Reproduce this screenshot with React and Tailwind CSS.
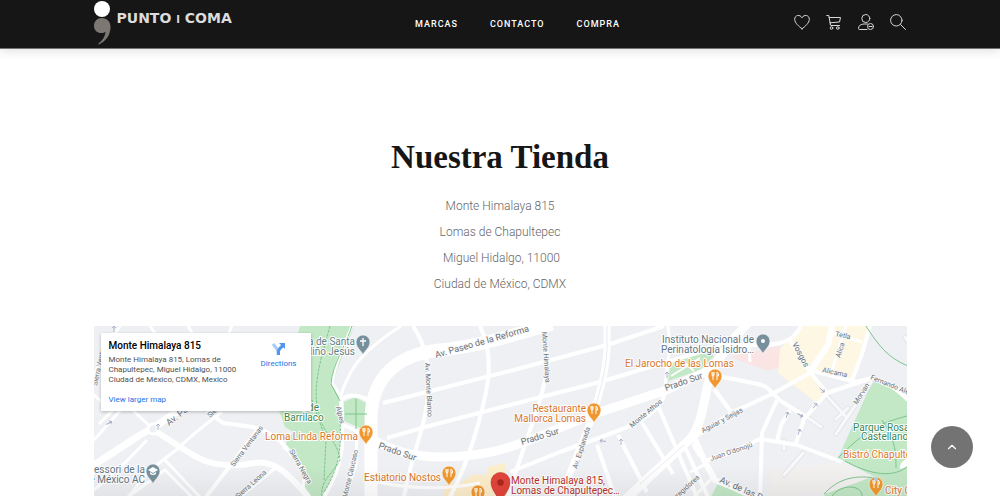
import React from 'react';
import { ChevronUp } from 'lucide-react';

const NAV_LINKS = ['Marcas', 'Contacto', 'Compra'];

const ADDRESS = [
  'Monte Himalaya 815',
  'Lomas de Chapultepec',
  '\u00a0Miguel Hidalgo, 11000',
  'Ciudad de México, CDMX',
];

// [path, width]
const ROADS = [
  // west side
  ['M94 465 L140 435 L153 428 L185 406 L230 376', 7],
  ['M155 431 C170 440 182 449 197 457 C212 466 236 467 254 463 C272 460 286 470 308 497', 6],
  ['M153 429 L126 404 L94 440', 3],
  ['M126 404 L150 380', 3],
  ['M94 395 L112 411 L99 424', 3],
  ['M180 447 C190 436 206 424 222 412', 3],
  ['M180 447 L150 470 L128 497', 3],
  ['M207 411 L223 423 L253 427 C272 432 284 442 292 456', 4],
  ['M258 429 L233 462 L206 497', 4],
  ['M278 466 L240 497', 3],
  ['M283 447 C300 457 306 470 303 490', 3],
  ['M94 490 L126 462 L147 440', 3],
  ['M128 497 L165 470 L192 497', 3],
  ['M165 460 L200 497', 3],
  ['M120 326 L104 350 L94 376', 3],
  ['M150 326 L163 345 M188 326 L196 340 M232 326 L226 340', 3],
  // around the glorieta
  ['M352 326 C344 346 334 366 332 383 L341 397', 3],
  ['M401 326 C376 342 356 360 349 376 C344 386 341 392 341 400', 3],
  ['M341 400 C350 392 362 396 372 402', 4],
  ['M341 400 C343 440 346 460 324 497', 4],
  ['M341 424 L370 437', 4],
  ['M357 431 L356 463 C354 476 348 486 344 497', 3],
  // centre
  ['M383 403 L510 371 L607 345 L664 326', 4],
  ['M387 438 L425 427 L510 405 L600 382 L690 355 L742 336', 4],
  ['M413 326 C426 345 429 365 428 390 C427 425 411 455 404 497', 4],
  ['M480 326 C489 345 490 362 488 380 C484 408 470 460 450 497', 4],
  ['M543 326 C545 345 550 362 545 380 C539 410 520 455 508 497', 4],
  ['M607 326 L607 350 C606 372 599 395 592 418 L568 478', 7],
  ['M510 472 L560 452 L612 433 C640 423 662 410 664 394', 4],
  ['M370 480 C400 488 440 491 480 483', 3],
  ['M597 445 L615 497', 4],
  ['M618 435 L647 492', 4],
  ['M641 421 L673 474', 4],
  ['M659 408 L679 455 L697 497', 4],
  ['M693 444 L700 456', 4],
  ['M625 497 L653 470 M684 445 L708 497', 4],
  ['M664 394 L670 345 L668 326', 3],
  // east side
  ['M713 375 L758 384 C772 387 774 398 784 403 L806 417', 4],
  ['M693 438 L733 412 L772 394 L810 373', 4],
  ['M714 389 L732 413', 4],
  ['M705 461 L727 454 L760 439 L797 445 L842 462', 4],
  ['M694 437 L705 462 L715 480 L757 497', 6],
  ['M777 400 L762 433 L760 497', 4],
  ['M790 410 L781 425 L777 441', 4],
  ['M872 378 L827 393 L804 419 L795 446', 4],
  ['M788 338 L810 372 L827 393', 4],
  ['M832 326 L828 345 L810 372', 6],
  ['M810 370 L856 382 L872 378', 4],
  ['M846 326 L838 350 L832 371', 3],
  ['M870 326 L862 354 L852 380', 4],
  ['M828 332 L862 342', 3],
  ['M735 345 L763 345 C785 344 794 340 801 326', 4],
  ['M749 345 L750 362', 3],
  ['M872 378 C888 382 898 390 908 400', 4],
  ['M690 472 L706 464 M694 497 L712 478', 3],
  ['M903 468 C902 464 908 462 909 460', 6],
];

const MAIN_ROADS = [
  ['M371 497 L371 420 C371 375 400 354 440 350 C480 346 510 336 552 324', 13],
  ['M371 438 C400 458 440 460 480 454 C520 448 555 428 600 412 L664 391 L710 370', 9],
  ['M749 322 C728 344 714 362 709 380 C703 404 702 424 690 439 L626 499', 9],
];

const PARKS = [
  'M277 405 L285 427 L293 432 L283 448 L299 460 L303 484 L312 497 L325 497 L337 470 L342 453 L342 423 L339 397 L332 383 L354 326 L300 326 Z',
  'M344 402 L355 397 L366 403 L367 431 L344 421 Z',
  'M873 380 C886 378 896 386 907 398 L907 497 L824 497 C826 486 845 479 875 477 L838 458 Z',
  'M671 363 L668 381 L700 370 L714 356 L708 352 Z',
  'M718 483 L746 497 L711 497 Z',
];

const PATHS = [
  'M352 326 C346 345 332 365 331 384 L340 401',
  'M330 326 C322 355 312 385 318 410 C322 435 338 440 340 460 C332 475 320 480 322 497',
  'M340 420 C342 450 338 470 324 492',
  'M312 400 L326 440 L324 480',
  'M345 414 L367 414 M356 399 L356 429',
  'M866 326 C878 345 888 358 908 366',
  'M838 458 C860 436 875 424 907 416',
  'M845 461 C865 472 890 480 907 467',
  'M875 478 C850 474 835 482 824 494',
  'M882 420 C895 440 896 450 896 468',
  'M862 496 C862 485 842 483 832 496',
];

const STREET_LABELS = [
  ['Av. Paseo de la Reforma', 436, 358, -16, 9],
  ['Prado Sur', 378, 448, 19, 9],
  ['Prado Sur', 522, 445, -17, 9],
  ['Prado Sur', 666, 391, -19, 9],
  ['Av. Monte Blanco', 425, 363, 87, 7],
  ['Monte Himalaya', 542, 332, 86, 7],
  ['Av. Explanada', 577, 469, -72, 7],
  ['Monte Athos', 632, 428, -40, 7],
  ['Sierra Ventanas', 234, 467, -53, 7],
  ['Sierra Leona', 238, 499, -42, 7],
  ['Sierra Negra', 289, 451, 60, 7],
  ['Av. Pa', 169, 426, -38, 9],
  ['Sierra', 210, 418, -42, 7],
  ['Sierra Ventana', 97, 386, -78, 7],
  ['Alpes', 336, 407, 76, 7],
  ['Monte Cáucaso', 347, 498, -77, 7],
  ['Aguiar y Seijas', 703, 433, -28, 7],
  ["Juan O'donojú", 711, 461, -19, 7],
  ['Vosgos', 792, 344, 62, 8],
  ['Tetla', 835, 336, 12, 7],
  ['Alica', 840, 358, -72, 7],
  ['Alicama', 822, 372, 12, 7],
  ['Morvan', 857, 405, -58, 7],
  ['Fernando Alencastre', 870, 379, 22, 7],
  ['Av. de las Palmas', 719, 482, 24, 9],
  ['Corregidores', 670, 505, -42, 7],
];

const PLACE_LABELS = [
  ['a de Santa', 355, 345, '#5f7f86', 'end'],
  ['Niño Jesús', 355, 355, '#5f7f86', 'end'],
  ['Instituto Nacional de', 754, 343, '#5f7682', 'end'],
  ['Perinatología Isidro…', 754, 353, '#5f7682', 'end'],
  ['Montessori de la', 145, 473, '#5f7682', 'end'],
  ['de México AC', 145, 483, '#5f7682', 'end'],
  ['a de', 319, 411, '#3c8650', 'end'],
  ['Barrilaco', 284, 421, '#3c8650', 'start'],
  ['Parque Rosario', 853, 431, '#3c8650', 'start'],
  ['Castellanos', 861, 440, '#3c8650', 'start'],
  ['El Jarocho de las Lomas', 625, 367, '#d9782d', 'start'],
  ['Restaurante', 586, 412, '#d9782d', 'end'],
  ['Mallorca Lomas', 586, 422, '#d9782d', 'end'],
  ['Loma Linda Reforma', 358, 440, '#d9782d', 'end'],
  ['Estiatorio Nostos', 441, 481, '#d9782d', 'end'],
  ['Bistró Chapultepec', 843, 458, '#d9782d', 'start'],
  ['City Café', 885, 494, '#d9782d', 'start'],
  ['Monte Himalaya 815,', 511, 484, '#b8322b', 'start'],
  ['Lomas de Chapultepec…', 511, 494, '#b8322b', 'start'],
];

const FOOD_PINS = [[366, 445], [449, 486], [594, 423], [715, 389], [876, 497], [478, 505]];

const PIN = 'M0 0 C-1 -4 -7 -7 -7 -13 A7 7 0 0 1 7 -13 C7 -7 1 -4 0 0 Z';

function Pin({ x, y, color, children }) {
  return (
    <g transform={`translate(${x} ${y})`}>
      <path d={PIN} fill={color} stroke="#fff" strokeWidth="0.6" />
      {children}
    </g>
  );
}

function StreetMap() {
  return (
    <svg
      className="block h-[170px] w-full bg-[#eff0f3] font-['Roboto',sans-serif]"
      viewBox="94 326 813 170"
      preserveAspectRatio="xMidYMin slice"
      role="img"
      aria-label="Mapa de Monte Himalaya 815"
    >
      <defs>
        <linearGradient id="fade" x1="0" y1="0" x2="0" y2="1">
          <stop offset="0" stopColor="#000" stopOpacity="0" />
          <stop offset="1" stopColor="#000" stopOpacity="0.05" />
        </linearGradient>
      </defs>

      {PARKS.map((d) => <path key={d} d={d} fill="#c3e8c6" />)}
      <path d="M730 357 L779 346 L788 364 L768 371 Z" fill="#fae5e4" />
      <path d="M780 349 L800 326 L872 326 L854 380 L812 373 L829 394 L818 404 L778 373 Z" fill="#fef7e3" />
      <path d="M460 483 L474 474 L486 476 L488 467 L505 463 L508 497 L443 497 L445 484 Z" fill="#fdeecb" />
      <path d="M770 470 L838 462 L872 477 L828 493 L770 497 Z" fill="#f3f1f0" />

      <g fill="none" stroke="#e4e6e9" strokeWidth="5" strokeLinecap="round">
        <path d="M871 382 L836 434 M807 417 L821 427 M827 396 L845 416 M836 419 L848 408 M784 475 L803 453 M784 441 L784 449 M905 337 L910 345" />
      </g>
      <g fill="none" stroke="#f8f9fa" strokeWidth="3" strokeLinecap="round">
        <path d="M871 382 L836 434 M807 417 L821 427 M827 396 L845 416 M836 419 L848 408 M784 475 L803 453 M784 441 L784 449 M905 337 L910 345" />
      </g>

      <g fill="none" stroke="#fff" strokeLinejoin="round">
        {[...ROADS, ...MAIN_ROADS].map(([d, width]) => <path key={d} d={d} strokeWidth={width} />)}
        <path d="M671 376 L700 358 M684 362 L694 371" strokeWidth="2" />
      </g>
      <path d="M607 326 L607 350 C606 372 599 395 592 418" fill="none" stroke="#e9ebee" strokeWidth="1" />
      <path d="M684 445 L640 484" fill="none" stroke="#e9ebee" strokeWidth="1" />
      <circle cx="153" cy="429" r="5" fill="#eff0f3" stroke="#fff" strokeWidth="3" />

      <g fill="none" stroke="#7cc58d" strokeWidth="1">
        {PATHS.map((d, i) => <path key={d} d={d} strokeDasharray={i > 0 && i < 4 ? '3 1' : undefined} />)}
      </g>

      {/* one-way arrows */}
      <g fill="none" stroke="#a3adc4" strokeWidth="0.9">
        {[[109, 423, 60], [158, 427, 0], [114, 329, 0], [603, 441, -80], [621, 442, 0], [667, 375, 0], [822, 390, 130], [815, 406, 40], [787, 415, 20], [800, 415, 120], [799, 432, 20]].map(([x, y, r]) => (
          <path key={`${x}-${y}`} d="M0 3 V-3 M-2 -1 L0 -3 L2 -1" transform={`translate(${x} ${y}) rotate(${r})`} />
        ))}
      </g>

      <g fill="#6b7076" stroke="#f8f9fa" strokeWidth="2" strokeLinejoin="round" paintOrder="stroke">
        {STREET_LABELS.map(([label, x, y, angle, size]) => (
          <text key={`${label}-${x}`} fontSize={size} transform={`translate(${x} ${y}) rotate(${angle})`}>{label}</text>
        ))}
      </g>

      {FOOD_PINS.map(([x, y]) => (
        <Pin key={x} x={x} y={y} color="#f0982f">
          <path
            d="M-3 -17 V-14 Q-3 -13 -2 -13 Q-1 -13 -1 -14 V-17 M-2 -17 V-9 M2 -9 V-17 Q4 -16 3.500 -13 H2"
            fill="none"
            stroke="#fff"
            strokeWidth="1"
          />
        </Pin>
      ))}
      <Pin x={363} y={355} color="#78909c">
        <path d="M0 -17 V-9 M-3 -14 H3" fill="none" stroke="#fff" strokeWidth="1.3" />
      </Pin>
      <Pin x={763} y={354} color="#78909c">
        <circle cy="-13" r="2" fill="#fff" />
      </Pin>
      <Pin x={153} y={484} color="#78909c">
        <path d="M-5 -14 L0 -17 L5 -14 L0 -11 Z M-3 -12 V-10 Q0 -8 3 -10 V-12 L0 -10 Z" fill="#fff" />
      </Pin>
      <path
        d="M500 504 C499 496 491 491 491 482 A9 9 0 0 1 510 482 C510 491 502 496 500 504 Z"
        fill="#e2453a"
        stroke="#b8322b"
        strokeWidth="0.6"
      />
      <circle cx="500.500" cy="482.500" r="3.200" fill="#ad2620" />
      <circle cx="876" cy="479" r="2" fill="#a8d3f2" />

      <g fontSize="10" stroke="#fff" strokeWidth="2" strokeLinejoin="round" paintOrder="stroke">
        {PLACE_LABELS.map(([label, x, y, color, anchor]) => (
          <text key={label} x={x} y={y} fill={color} textAnchor={anchor}>{label}</text>
        ))}
      </g>
      <rect x="94" y="466" width="813" height="30" fill="url(#fade)" />
    </svg>
  );
}

function InfoCard() {
  return (
    <div className="absolute left-[7px] top-[7px] flex w-[210px] justify-between bg-white px-2 pb-[5px] pt-[7px] font-['Roboto',sans-serif] shadow-[0_1px_3px_rgba(0,0,0,0.25)]">
      <div>
        <h2 className="text-[10px] leading-3 font-medium text-black">Monte Himalaya 815</h2>
        <p className="mt-[3px] whitespace-nowrap text-[8px] leading-[10px] text-[#4f4f4f]">
          Monte Himalaya 815, Lomas de<br />
          Chapultepec, Miguel Hidalgo, 11000<br />
          Ciudad de México, CDMX, Mexico
        </p>
        <a href="#mapa" className="mt-[9px] block text-[8px] leading-3 text-[#1a73e8]">View larger map</a>
      </div>
      <a href="#direcciones" className="mr-1.5 flex flex-col items-center pt-0.5 text-[8px] leading-3 text-[#1a73e8]">
        <svg className="h-[14px] w-[14px]" viewBox="0 0 14 14" aria-hidden="true">
          <path d="M1 2 L5 7 Q6 8 6 13" fill="none" stroke="#a9cbf7" strokeWidth="3" />
          <path d="M6.500 13 V9 Q7 7 11 3.500" fill="none" stroke="#5196ee" strokeWidth="3" />
          <path d="M7 1 H13 V7 Z" fill="#5196ee" />
        </svg>
        <span className="mt-0.5">Directions</span>
      </a>
    </div>
  );
}

function Icon({ children }) {
  return (
    <svg
      className="block h-4 w-4"
      viewBox="0 0 16 16"
      fill="none"
      stroke="#d8d8d8"
      strokeWidth="1"
      strokeLinecap="round"
      strokeLinejoin="round"
      aria-hidden="true"
    >
      {children}
    </svg>
  );
}

function Header() {
  return (
    <header className="relative border-b border-[#777272] bg-[#161616] px-4 font-['Roboto',sans-serif] shadow-[0_2px_10px_rgba(0,0,0,0.12)]">
      <div className="mx-auto flex h-12 w-full max-w-[813px] items-center justify-between">
        <a href="#inicio" className="flex min-w-[147px] items-start gap-1.5 pb-0.5" aria-label="Punto y Coma">
          <svg className="h-[44px] w-[17px]" viewBox="0 0 17 44" aria-hidden="true">
            <circle cx="8" cy="8" r="8" fill="#fff" />
            <path d="M8 17 C3 17 0 20.500 0 25 C0 29.500 3.500 32 7 32 C9 32 10.500 31.500 11.500 31 C11 36 8 40 4 43 L5 43.500 C12 40 16.500 34 16.500 26 C16.500 20.500 13 17 8 17 Z" fill="#7d7772" />
          </svg>
          <span className="whitespace-nowrap pt-2 font-['DejaVu_Sans',sans-serif] text-[14px] leading-[18px] font-bold text-[#dcdcdc]">
            PUNTO <span className="text-[10px]">I</span> COMA
          </span>
        </a>

        <nav className="flex gap-8">
          {NAV_LINKS.map((link) => (
            <a key={link} href={`#${link.toLowerCase()}`} className="text-[9px] leading-4 font-medium tracking-[1px] text-white uppercase">
              {link}
            </a>
          ))}
        </nav>

        <div className="flex gap-4 pb-1">
          <button type="button" aria-label="Favoritos">
            <Icon>
              <path d="M8 14.800 C5 12.500 0.700 9 0.700 5.300 C0.700 1 6 0 8 3.800 C10 0 15.300 1 15.300 5.300 C15.300 9 11 12.500 8 14.800 Z" />
            </Icon>
          </button>
          <button type="button" aria-label="Carrito">
            <Icon>
              <path d="M0.800 1.500 H2.800 L4.300 10 M3.100 3.500 H14.500 L13.500 8 L4 8.800 M4.300 10 Q3.800 11.500 5 11.500 H13.500" />
              <circle cx="5.500" cy="14" r="1.300" />
              <circle cx="11.800" cy="14" r="1.300" />
            </Icon>
          </button>
          <button type="button" aria-label="Mi cuenta">
            <Icon>
              <circle cx="7.800" cy="4.500" r="4" />
              <path d="M9 15.500 H1.500 Q0.500 15.500 0.500 14.500 C0.500 11.500 3 10 6 10 H9.500" />
              <circle cx="12.500" cy="12.500" r="3" />
              <path d="M11 12.500 H14" />
            </Icon>
          </button>
          <button type="button" aria-label="Buscar">
            <Icon>
              <circle cx="6.300" cy="6.300" r="5.700" />
              <path d="M10.500 10.500 L15.500 15.500" />
            </Icon>
          </button>
        </div>
      </div>
    </header>
  );
}

export default function App() {
  return (
    <div className="bg-white">
      <Header />
      <main className="px-4 pt-[88px] text-center">
        <h1 className="font-['Liberation_Serif',serif] text-[33px] leading-10 font-bold text-[#161616]">Nuestra Tienda</h1>
        <address className="mt-4 font-['Roboto',sans-serif] text-[12px] leading-[26px] font-light text-[#666] not-italic">
          {ADDRESS.map((line) => <p key={line}>{line}</p>)}
        </address>
        <section id="mapa" className="relative mx-auto mt-[29px] w-full max-w-[813px] text-left">
          <StreetMap />
          <InfoCard />
        </section>
      </main>
      <button
        type="button"
        aria-label="Volver arriba"
        className="fixed right-[27px] bottom-7 flex h-[42px] w-[42px] items-center justify-center rounded-full bg-[#737373] text-white"
      >
        <ChevronUp className="h-3.5 w-3.5" strokeWidth={2} />
      </button>
    </div>
  );
}
